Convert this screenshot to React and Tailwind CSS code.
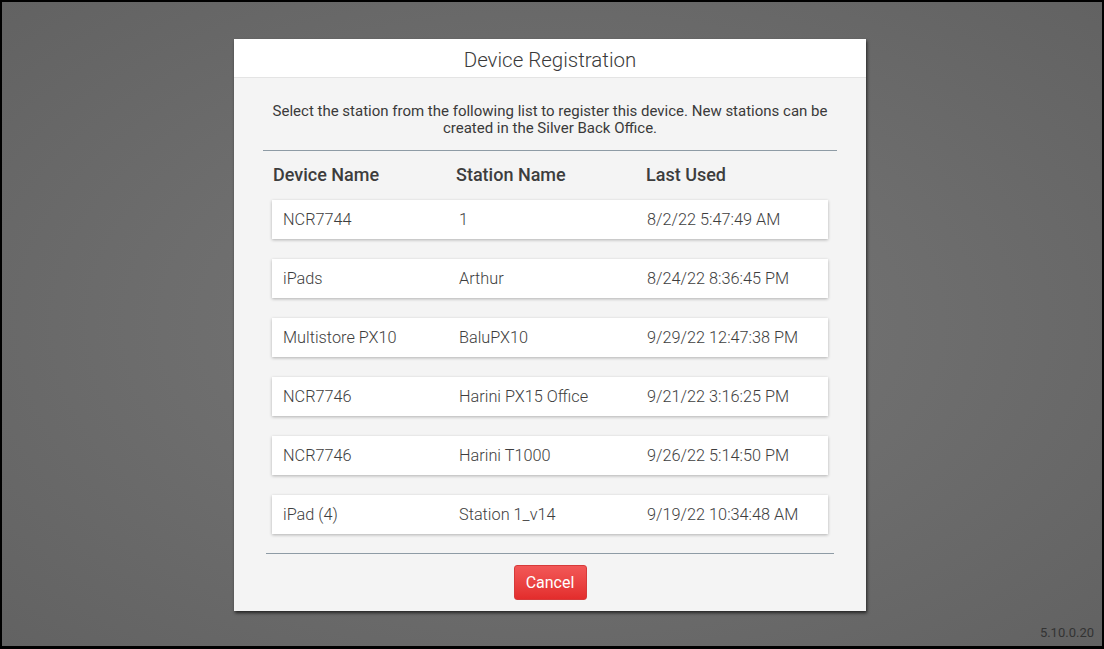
import React from "react";

const rows = [
  ["NCR7744", "1", "8/2/22 5:47:49 AM"],
  ["iPads", "Arthur", "8/24/22 8:36:45 PM"],
  ["Multistore PX10", "BaluPX10", "9/29/22 12:47:38 PM"],
  ["NCR7746", "Harini PX15 Office", "9/21/22 3:16:25 PM"],
  ["NCR7746", "Harini T1000", "9/26/22 5:14:50 PM"],
  ["iPad (4)", "Station 1_v14", "9/19/22 10:34:48 AM"],
];

export default function App() {
  return (
    <div
      className="w-[1104px] h-[649px] box-border border-black border-t-2 border-l-2 border-r-2 border-b-[3px] flex flex-col bg-[radial-gradient(ellipse_at_center,#777777_0%,#6d6d6d_50%,#626262_100%)]"
      style={{ fontFamily: "Roboto, 'Noto Sans', sans-serif" }}
    >
      <div className="self-center mt-[37px] ml-[-4px] w-[632px] h-[572px] flex flex-col bg-[#f4f4f4] shadow-[1px_2px_3px_rgba(0,0,0,0.65)]">
        <div className="h-[39px] shrink-0 bg-white border-b border-[#e4e4e4] flex items-center justify-center pt-[4px]">
          <span className="text-[20.5px] font-light text-[#3a3a3a]">Device Registration</span>
        </div>
        <div className="flex flex-col flex-1">
          <p className="mt-[25px] px-[30px] text-center text-[15px] leading-[17px] text-[#3a3a3a]">
            Select the station from the following list to register this device. New stations can be created in the Silver Back Office.
          </p>
          <div className="mx-[29px] mt-[13px] h-px bg-[#8e9ba5]"></div>
          <div className="mx-[38px] mt-[10px] h-[22px] grid grid-cols-[183px_190px_1fr] pl-px items-center text-[18px] font-medium text-[#3d3d3d]">
            <span>Device Name</span>
            <span>Station Name</span>
            <span>Last Used</span>
          </div>
          <div className="mx-[38px] mt-[17px] flex flex-col gap-[20px]">
            {rows.map((r, i) => (
              <div
                key={i}
                className="h-[39px] bg-white grid grid-cols-[176px_188px_1fr] pl-[11px] pt-[2px] items-center text-[16.3px] font-light text-[#3e3e3e] shadow-[0_1px_3px_rgba(0,0,0,0.28)]"
              >
                <span>{r[0]}</span>
                <span>{r[1]}</span>
                <span>{r[2]}</span>
              </div>
            ))}
          </div>
          <div className="mx-[32px] mt-[19px] h-px bg-[#8e9ba5]"></div>
          <div className="flex justify-center mt-[11px]">
            <button className="w-[73px] h-[35px] rounded-[3px] border border-[#d63a3a] bg-gradient-to-b from-[#f25757] to-[#e32c2c] text-white text-[16px] flex items-center justify-center pt-px">
              Cancel
            </button>
          </div>
        </div>
      </div>
      <div className="mt-auto self-end mr-[8px] mb-[4px] text-[13px] text-[#333]">5.10.0.20</div>
    </div>
  );
}
